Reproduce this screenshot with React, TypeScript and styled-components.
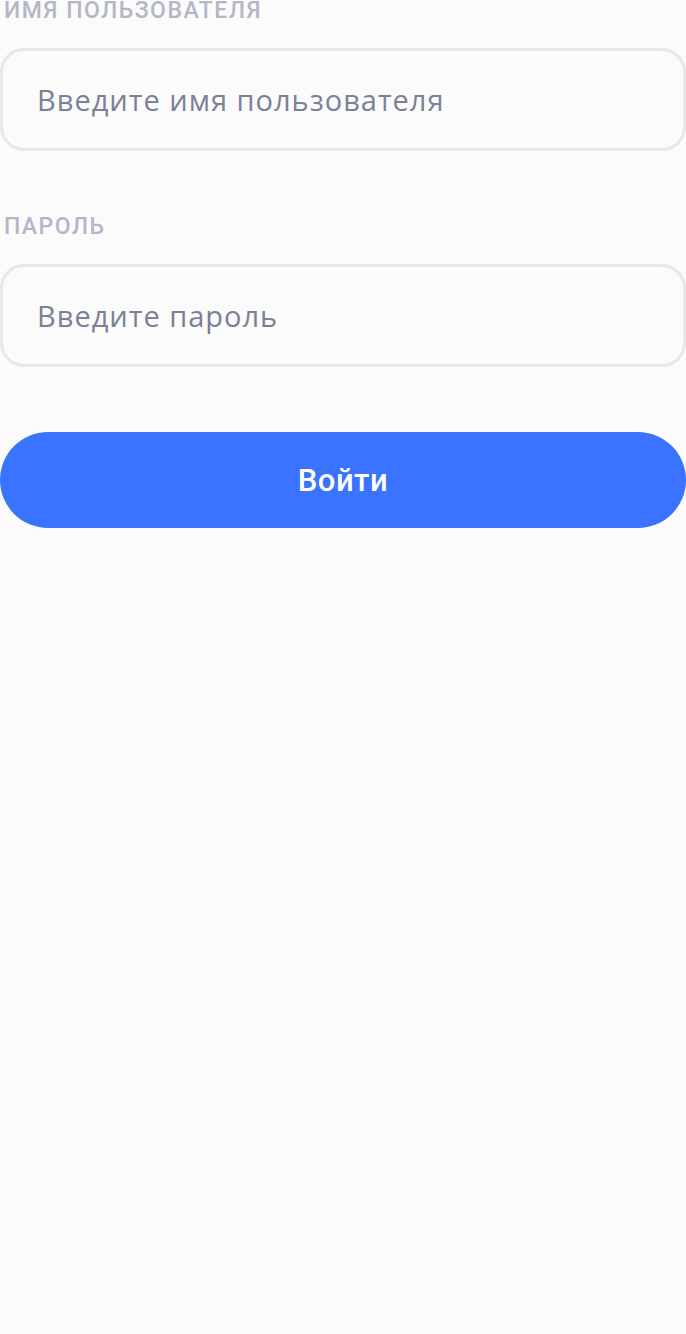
import React from "react";
import styled, { createGlobalStyle } from "styled-components";

const Global = createGlobalStyle`
  html, body { margin: 0; padding: 0; background: #fbfbfb; }
  body { font-family: Roboto, "Noto Sans", sans-serif; }
`;

const Page = styled.div`
  min-height: 1334px;
  background: #fbfbfb;
  display: flex;
  flex-direction: column;
  box-sizing: border-box;
`;

const Form = styled.form`
  display: flex;
  flex-direction: column;
`;

const Field = styled.div<{ $mb: number }>`
  display: flex;
  flex-direction: column;
  gap: 26px;
  margin-bottom: ${(p) => p.$mb}px;
`;

const Label = styled.label`
  font-family: Roboto, sans-serif;
  font-weight: 500;
  font-size: 23px;
  line-height: 22px;
  letter-spacing: 1.5px;
  text-transform: uppercase;
  color: #b4b7c8;
  padding-left: 4px;
`;

const Input = styled.input`
  box-sizing: border-box;
  width: 100%;
  height: 103px;
  border: 3px solid #e7e7ed;
  border-radius: 24px;
  background: #fbfbfb;
  padding: 0 34px;
  font-family: "Open Sans", sans-serif;
  font-size: 29px;
  letter-spacing: 1px;
  color: #3a3f50;
  outline: none;
  &::placeholder { color: #7b8196; }
`;

const Button = styled.button`
  height: 96px;
  width: 100%;
  border: none;
  border-radius: 48px;
  background: #3a73ff;
  color: #ffffff;
  font-family: Roboto, sans-serif;
  font-weight: 500;
  font-size: 31px;
  letter-spacing: 0.5px;
  cursor: pointer;
`;

export default function App() {
  return (
    <Page>
      <Global />
      <Form onSubmit={(e) => e.preventDefault()}>
        <Field $mb={65}>
          <Label>Имя пользователя</Label>
          <Input type="text" placeholder="Введите имя пользователя" />
        </Field>
        <Field $mb={65}>
          <Label>Пароль</Label>
          <Input type="password" placeholder="Введите пароль" />
        </Field>
        <Button type="submit">Войти</Button>
      </Form>
    </Page>
  );
}
